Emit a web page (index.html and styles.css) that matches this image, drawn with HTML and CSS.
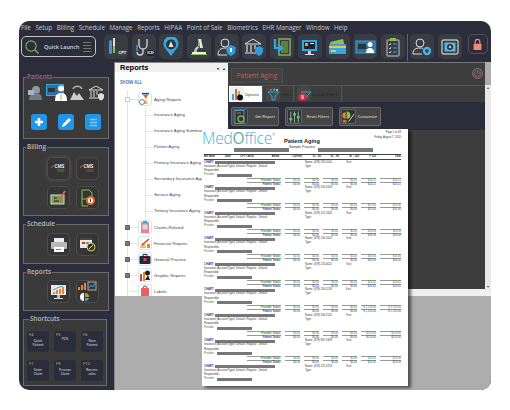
FILE: index.html
```html
<!DOCTYPE html>
<html lang="en">
<head>
    <meta charset="UTF-8">
    <title>Patient Aging</title>
    <link rel="stylesheet" href="styles.css">
</head>
<body>
    <div class="app">
        <nav class="menu-bar">
            <span>File</span><span>Setup</span><span>Billing</span><span>Schedule</span><span>Manage</span><span>Reports</span><span>HIPAA</span><span>Point of Sale</span><span>Biometrics</span><span>EHR Manager</span><span>Window</span><span>Help</span>
        </nav>

        <div class="toolbar">
            <div class="quick-launch">
                <svg width="14" height="14" viewBox="0 0 15 15"><circle cx="6.500" cy="6.500" r="5.500" fill="none" stroke="#7fae55" stroke-width="1.200"/><path d="M10.500 10.500l4 4" stroke="#7fae55" stroke-width="1.400"/></svg>
                <span>Quick Launch</span>
                <div class="ql-lines"><i></i><i></i><i></i><i></i></div>
            </div>
            <div class="tool-buttons">
                <button class="tool"><svg width="20" height="20" viewBox="0 0 20 20"><rect x="3" y="3" width="3" height="14" rx="1.500" fill="#3f9ad6"/><rect x="7" y="1" width="2" height="15" fill="#e0e0e0"/><rect x="7" y="9" width="2" height="7" fill="#8cc152"/></svg><b class="tool-tag">CPT</b></button>
                <button class="tool"><svg width="20" height="20" viewBox="0 0 20 20"><path d="M5 2v6a4 4 0 0 0 8 0V2M9 12v3a3 3 0 0 1-6 0" fill="none" stroke="#d8d8d8" stroke-width="1.300"/><path d="M3 8v6" stroke="#3f9ad6" stroke-width="1.500"/></svg><b class="tool-tag dark">ICD</b></button>
                <button class="tool"><svg width="18" height="20" viewBox="0 0 18 20"><path d="M9 19L3 11a7.500 7.500 0 1 1 12 0z" fill="#35a7e0"/><circle cx="9" cy="7.500" r="5" fill="#333"/><path d="M9 4l2.500 6h-5z" fill="#cfe8f5"/></svg></button>
                <button class="tool"><svg width="20" height="20" viewBox="0 0 20 20"><path d="M9 2h3l2 9h-3z" fill="#e8e8e8"/><path d="M5 15c0-3 2-5 4-6l1 2c-2 1-3 2-2 4z" fill="#cfcfcf"/><rect x="3" y="15" width="14" height="2" fill="#f0f0f0"/><rect x="9" y="5" width="2" height="4" fill="#8cc152"/><rect x="2" y="17" width="16" height="1" fill="#8cc152"/></svg></button>
                <button class="tool"><svg width="20" height="20" viewBox="0 0 20 20"><circle cx="8" cy="6" r="4" fill="none" stroke="#ddd"/><path d="M1 18c0-5 3-7 7-7 1 0 2 .2 3 .5M1 18h9" fill="none" stroke="#ddd"/><path d="M14 8l4.500 2v4c0 2-2 4-4.500 5-2.500-1-4.500-3-4.500-5v-4z" fill="#2f9be0"/><rect x="13" y="11" width="2" height="4" fill="#fff"/></svg></button>
                <button class="tool"><svg width="20" height="20" viewBox="0 0 20 20"><path d="M1 7l8-5 8 5z" fill="none" stroke="#e0e0e0"/><path d="M3 8v7M7 8v7M11 8v4M1 16h11" stroke="#e0e0e0" stroke-width="1.200"/><path d="M15 9l4 2v3c0 2-2 4-4 5-2-1-4-3-4-5v-3z" fill="#2f9be0"/></svg></button>
                <button class="tool"><svg width="20" height="20" viewBox="0 0 20 20"><rect x="7" y="2" width="11" height="16" fill="none" stroke="#7fae55" stroke-width="1.500"/><rect x="9" y="4" width="7" height="12" fill="#5b7f3c"/><path d="M3 2v9h6M6 8l4 3-4 3" fill="none" stroke="#35a7e0" stroke-width="2.200"/></svg></button>
                <button class="tool"><svg width="20" height="20" viewBox="0 0 20 20"><rect x="2" y="3" width="15" height="11" fill="#35a7e0"/><rect x="4" y="5" width="11" height="7" fill="#223"/><rect x="5" y="6" width="3" height="3" fill="#8cc152"/><rect x="10" y="6" width="4" height="1" fill="#ddd"/><rect x="8" y="14" width="3" height="3" fill="#ccc"/><rect x="5" y="17" width="9" height="1" fill="#ddd"/></svg></button>
                <button class="tool"><svg width="21" height="20" viewBox="0 0 21 20"><path d="M3 5l13-3 2 8-13 3z" fill="#8cc152"/><rect x="2" y="7" width="17" height="10" rx="1" fill="#35a7e0"/><rect x="2" y="9" width="17" height="2" fill="#f5c242"/><rect x="4" y="13" width="5" height="2" fill="#f5c242"/></svg></button>
                <button class="tool"><svg width="21" height="20" viewBox="0 0 21 20"><rect x="1" y="4" width="19" height="12" fill="#2d6f9e" stroke="#35a7e0"/><rect x="3" y="7" width="8" height="5" fill="#333"/><circle cx="15" cy="7.500" r="2.500" fill="#fff"/><path d="M11 16c0-4 2-5 4-5s4 1 4 5z" fill="#fff"/></svg></button>
                <button class="tool"><svg width="18" height="20" viewBox="0 0 18 20"><rect x="3" y="3" width="12" height="16" rx="1" fill="none" stroke="#9a9a9a" stroke-width="1.500"/><rect x="6" y="1" width="6" height="3" fill="#8cc152"/><path d="M5 7l1 1 1-2M5 11l1 1 1-2M5 15l1 1 1-2" fill="none" stroke="#eee" stroke-width=".8"/><path d="M9 7h4M9 11h4M9 15h4" stroke="#35a7e0"/></svg></button>
                <span class="tool-divider"></span>
                <button class="tool"><svg width="20" height="20" viewBox="0 0 20 20"><circle cx="8" cy="6" r="4" fill="none" stroke="#ddd"/><path d="M1 17c0-5 3-6 7-6 1 0 2 .1 3 .4M1 17h9" fill="none" stroke="#ddd"/><circle cx="15" cy="14" r="3" fill="none" stroke="#4fb0e8" stroke-width="2.400"/></svg></button>
                <button class="tool"><svg width="20" height="20" viewBox="0 0 20 20"><rect x="2" y="3" width="16" height="14" rx="2" fill="none" stroke="#bbb" stroke-width="1.400"/><rect x="4.500" y="5.500" width="11" height="9" fill="#55b4e8"/><circle cx="10" cy="10" r="3" fill="#333"/><circle cx="10" cy="10" r="1.200" fill="#ccc"/></svg></button>
                <button class="tool lock"><svg width="11" height="13" viewBox="0 0 14 16"><path d="M4 7V4.500a3 3 0 0 1 6 0V7" fill="none" stroke="#f08a78" stroke-width="1.500"/><rect x="2" y="7" width="10" height="8" rx="1" fill="#f08a78"/></svg></button>
            </div>
        </div>

        <div class="workspace">
            <aside class="sidebar">
                <fieldset class="group patients">
                    <legend class="legend-active">Patients</legend>
                    <div class="patient-icons">
                        <svg width="17" height="17" viewBox="0 0 17 17"><circle cx="9" cy="6" r="4" fill="#8b9aa8"/><path d="M2 16c0-5 3-7 7-7s6 2 6 7z" fill="#6d7c8a"/><rect x="1" y="6" width="6" height="5" fill="#a9b4bd"/></svg>
                        <svg width="21" height="17" viewBox="0 0 21 17"><rect x="0.500" y="0.500" width="17" height="11" fill="#2d6f9e" stroke="#35a7e0"/><rect x="2" y="4" width="7" height="4" fill="#333"/><circle cx="15" cy="4.500" r="3" fill="#fff"/><path d="M9 17c0-6 2-8 6-8s6 2 6 8z" fill="#fff"/><path d="M15 10v6" stroke="#8cc152"/></svg>
                        <svg width="17" height="17" viewBox="0 0 17 17"><path d="M4 5a5 5 0 0 1 9 0" fill="none" stroke="#aaa" stroke-width="1.500"/><path d="M1 16l4-8 3 4 2-3 5 7z" fill="#c8cfc0"/></svg>
                        <svg width="17" height="17" viewBox="0 0 17 17"><path d="M1 6l7-4 7 4z" fill="none" stroke="#ddd"/><path d="M3 7v6M6 7v6M9 7v4M1 14h9" stroke="#ddd"/><path d="M13 9l3 1.500v2.500c0 1.500-1.500 3-3 3.500-1.500-.5-3-2-3-3.500v-2.500z" fill="#ddd"/></svg>
                    </div>
                    <div class="patient-actions">
                        <span class="blue-btn"><svg width="10" height="10" viewBox="0 0 10 10"><path d="M5 1v8M1 5h8" stroke="#fff" stroke-width="2.600"/></svg></span>
                        <span class="blue-btn"><svg width="11" height="11" viewBox="0 0 11 11"><path d="M1 10l1-3 6-6 2 2-6 6z" fill="#fff"/></svg></span>
                        <span class="blue-btn"><svg width="9" height="9" viewBox="0 0 9 9"><path d="M1 1.500h7M1 4.500h7M1 7.500h7" stroke="#7cc4f4" stroke-width="1.400"/></svg></span>
                    </div>
                </fieldset>

                <fieldset class="group billing">
                    <legend>Billing</legend>
                    <div class="icon-grid">
                        <span class="side-btn picked"><svg class="cms-arc" width="7" height="4" viewBox="0 0 7 4"><path d="M0 4c1-2 3-3 7-3" fill="none" stroke="#c8503f" stroke-width="1.200"/></svg><span class="cms">CMS<em class="cms-green">1500</em></span></span>
                        <span class="side-btn"><svg class="cms-arc" width="7" height="4" viewBox="0 0 7 4"><path d="M0 4c1-2 3-3 7-3" fill="none" stroke="#c8503f" stroke-width="1.200"/></svg><span class="cms">CMS<em class="cms-red">1450</em></span></span>
                        <span class="side-btn"><svg width="17" height="15" viewBox="0 0 17 15"><rect x="1" y="5" width="13" height="9" fill="#7a9a5a" stroke="#cfe0bf"/><path d="M4 8h3M4 11h5" stroke="#222"/><path d="M10 9l5-8" stroke="#e0604f" stroke-width="1.800"/></svg></span>
                        <span class="side-btn"><svg width="16" height="18" viewBox="0 0 16 18"><path d="M2 1h7l3 3v6H2z M2 10v7h6" fill="none" stroke="#8cc152"/><circle cx="10.500" cy="11.500" r="4.500" fill="#e8662a"/><circle cx="10.500" cy="11.500" r="2.500" fill="#fff"/><rect x="10" y="10" width="1" height="3" fill="#333"/></svg></span>
                    </div>
                </fieldset>

                <fieldset class="group schedule">
                    <legend>Schedule</legend>
                    <div class="icon-grid">
                        <span class="side-btn"><svg width="18" height="16" viewBox="0 0 18 16"><rect x="4" y="1" width="10" height="4" fill="#eee"/><rect x="1" y="5" width="16" height="7" rx="1" fill="#b9b9b9"/><rect x="4" y="10" width="10" height="5" fill="#fff"/><rect x="6" y="12" width="5" height="1" fill="#e0604f"/></svg></span>
                        <span class="side-btn"><svg width="17" height="15" viewBox="0 0 17 15"><rect x="1" y="1" width="12" height="10" fill="#e8e8e8"/><rect x="1" y="1" width="12" height="2" fill="#444"/><rect x="3" y="5" width="3" height="2" fill="#c0392b"/><rect x="7" y="5" width="3" height="2" fill="#7a9a5a"/><circle cx="12" cy="10" r="4" fill="#333" stroke="#d9d24a"/><path d="M10 12l4-4" stroke="#ddd"/></svg></span>
                    </div>
                </fieldset>

                <fieldset class="group reports">
                    <legend>Reports</legend>
                    <div class="icon-grid">
                        <span class="side-btn"><svg width="17" height="16" viewBox="0 0 17 16"><rect x="1" y="1" width="15" height="10" fill="#e8e8e8"/><path d="M3 10V8h2v2zM6 10V6h2v4zM9 10V5h2v5zM12 10V3h2v7z" fill="#e8862a"/><path d="M3 6l4-2 3-1 3-1" fill="none" stroke="#35a7e0"/><rect x="7" y="11" width="3" height="3" fill="#bbb"/><rect x="4" y="14" width="9" height="1" fill="#ddd"/></svg></span>
                        <span class="side-btn"><svg width="21" height="21" viewBox="0 0 21 21"><path d="M1 9V6h2v3zM4 9V4h2v5zM7 9V2h2v7z" fill="#e8862a"/><rect x="11" y="1" width="8" height="8" fill="none" stroke="#ccc" stroke-width=".8"/><path d="M12 7l2-3 2 2 2-4" fill="none" stroke="#35a7e0"/><path d="M7 12a4 4 0 1 0 0 8z" fill="#fff"/><path d="M8 12a4 4 0 0 1 4 4H8z" fill="#e8862a"/><path d="M8 17h4a4 4 0 0 1-4 3z" fill="#35a7e0"/></svg></span>
                    </div>
                </fieldset>

                <fieldset class="group shortcuts">
                    <legend>Shortcuts</legend>
                    <div class="shortcut-grid">
                        <div class="shortcut"><b>F4</b><span>Quick<br>Patient</span></div>
                        <div class="shortcut"><b>F5</b><span class="single">POS</span></div>
                        <div class="shortcut"><b>F6</b><span>New<br>Patient</span></div>
                        <div class="shortcut"><b>F7</b><span>Enter<br>Claim</span></div>
                        <div class="shortcut"><b>F9</b><span>Process<br>Claim</span></div>
                        <div class="shortcut"><b>F10</b><span>Reconc-<br>ailes</span></div>
                    </div>
                </fieldset>
            </aside>

            <main class="mdi">
                <div class="panes">
                    <section class="tree-pane">
                        <header class="tree-head">
                            <span>Reports</span>
                            <span class="pin-btns"><i>&#9662;</i><i>&#9652;</i></span>
                        </header>
                        <a class="show-all">SHOW ALL</a>
                        <ul class="tree">
                            <li>
                                <div class="node"><i class="toggle"></i><i class="dash"></i>
                                    <span class="node-icon"><svg width="12" height="12" viewBox="0 0 12 12"><rect x="3" y="0" width="7" height="1.500" fill="#2b4a8a"/><path d="M4 2h5L7 6z" fill="#e0604f"/><path d="M7 6l2 5H4z" fill="#f5c242"/><circle cx="3" cy="9" r="2.500" fill="#fff" stroke="#333" stroke-width=".6"/></svg></span>
                                    <span class="node-label">Aging Reports</span></div>
                                <ul class="sub-tree">
                                    <li>Insurance Aging</li>
                                    <li>Insurance Aging Summary</li>
                                    <li class="visited">Patient Aging</li>
                                    <li>Primary Insurance Aging</li>
                                    <li>Secondary Insurance Aging</li>
                                    <li class="visited">Service Aging</li>
                                    <li>Tertiary Insurance Aging</li>
                                </ul>
                            </li>
                            <li><div class="node"><i class="toggle dark"></i><i class="dash"></i>
                                <span class="node-icon"><svg width="12" height="12" viewBox="0 0 12 12"><rect x="2" y="1" width="8" height="11" fill="#e9828a"/><rect x="4" y="0" width="4" height="2" fill="#35a7e0"/><rect x="3.500" y="3.500" width="5" height="5" fill="#cde"/></svg></span>
                                <span class="node-label">Claims-Related</span></div></li>
                            <li><div class="node"><i class="toggle dark"></i><i class="dash"></i>
                                <span class="node-icon"><svg width="12" height="12" viewBox="0 0 12 12"><path d="M1 11c0-3 2-5 3-5s3 2 3 5z" fill="#f5c242"/><path d="M3 8l7-6" stroke="#d23b3b" stroke-width="1.400"/><rect x="8" y="7" width="3" height="4" fill="#e8862a"/></svg></span>
                                <span class="node-label">Financial Reports</span></div></li>
                            <li><div class="node"><i class="toggle dark"></i><i class="dash"></i>
                                <span class="node-icon"><svg width="12" height="12" viewBox="0 0 12 12"><path d="M4 3V1.500h4V3" fill="none" stroke="#222"/><rect x="0.500" y="3" width="11" height="8" rx="1" fill="#222838"/><rect x="4.500" y="5" width="3" height="3" fill="#e0404f"/></svg></span>
                                <span class="node-label">General Practice</span></div></li>
                            <li><div class="node"><i class="toggle dark"></i><i class="dash"></i>
                                <span class="node-icon"><svg width="12" height="12" viewBox="0 0 12 12"><rect x="1" y="5" width="2" height="7" fill="#d23b3b"/><rect x="4" y="3" width="2" height="9" fill="#e8862a"/><circle cx="8.500" cy="4" r="2.500" fill="#222"/><path d="M6 11l3-5 2 5z" fill="#222"/></svg></span>
                                <span class="node-label">Graphic Reports</span></div></li>
                            <li><div class="node"><i class="toggle none"></i><i class="dash"></i>
                                <span class="node-icon"><svg width="12" height="12" viewBox="0 0 12 12"><path d="M4 3a2 2 0 0 1 4 0" fill="none" stroke="#555"/><rect x="2" y="3" width="8" height="9" rx="1" fill="#e9605f"/></svg></span>
                                <span class="node-label">Labels</span></div></li>
                        </ul>
                    </section>

                    <section class="report-pane">
                        <div class="report-main">
                            <div class="report-body">
                                <div class="title-row">
                                    <div class="report-title">Patient Aging</div>
                                    <span class="power"><svg width="11" height="11" viewBox="0 0 11 11"><circle cx="5.500" cy="5.500" r="5" fill="#4a4a4a" stroke="#8a8a8a" stroke-width=".7"/><path d="M3.700 3.500a3 3 0 1 0 3.600 0M5.500 2v3" fill="none" stroke="#b5584d" stroke-width=".9"/></svg></span>
                                </div>
                                <div class="tabs">
                                    <div class="tab active"><span class="tab-icon"><svg width="13" height="13" viewBox="0 0 13 13"><rect x="1" y="6" width="2" height="6" fill="#35a7e0"/><rect x="4" y="1" width="2" height="11" fill="#e0604f"/><rect x="7" y="3" width="2" height="4" fill="#8cc152"/><circle cx="9" cy="9.500" r="3" fill="#111"/></svg></span>Options</div>
                                    <div class="tab filters"><span class="tab-icon"><svg width="13" height="13" viewBox="0 0 13 13"><path d="M1 4h11L8 8v4H5V8z" fill="none" stroke="#3aa0c8"/><circle cx="4" cy="2" r="1" fill="#e0604f"/><circle cx="7" cy="1.500" r="1" fill="#8cc152"/><circle cx="10" cy="2" r="1" fill="#ddd"/></svg></span>Filters</div>
                                    <div class="tab exclude"><span class="tab-icon"><svg width="13" height="13" viewBox="0 0 13 13"><path d="M3 4h10L9 8v2" fill="none" stroke="#3aa0c8"/><circle cx="4.500" cy="9" r="4" fill="#d9283a"/><path d="M3 8h3M3 10h3" stroke="#fff"/></svg></span>Exclude Filters</div>
                                </div>
                                <div class="action-row">
                                    <button class="action wide"><span class="action-icon"><svg width="13" height="14" viewBox="0 0 13 14"><rect x="1" y="0.500" width="9" height="13" fill="none" stroke="#3aa0c8"/><circle cx="7" cy="9" r="3" fill="none" stroke="#7fae55" stroke-width="1.400"/><path d="M3 3h4" stroke="#e0604f"/></svg></span>Get Report</button>
                                    <button class="action wide"><span class="action-icon"><svg width="14" height="14" viewBox="0 0 14 14"><path d="M3 1v12M7 1v12M11 1v12" stroke="#9fc0a0"/><rect x="1.500" y="8" width="3" height="2.500" fill="#5cc0b0"/><rect x="5.500" y="3" width="3" height="2.500" fill="#5cc0b0"/><rect x="9.500" y="6" width="3" height="2.500" fill="#5cc0b0"/></svg></span>Reset Filters</button>
                                    <button class="action"><span class="action-icon"><svg width="14" height="14" viewBox="0 0 14 14"><path d="M5 1a4 4 0 0 1 0 8z" fill="#8cc152"/><path d="M4 2a3.500 3.500 0 0 0 0 7z" fill="#e8862a"/><rect x="1" y="10" width="4" height="3" fill="#e0604f"/><path d="M7 12l6-8" stroke="#ddd"/></svg></span>Customize</button>
                                </div>
                                <div class="report-empty"></div>
                            </div>
                            <div class="v-scroll"><i>&#9652;</i><i>&#9662;</i></div>
                        </div>
                        <div class="h-scroll"></div>
                    </section>
                </div>

                <article class="report-page">
                    <div class="page-head">
                        <div class="logo">Med<span class="logo-o">O</span>ffice<sup>&reg;</sup></div>
                        <div class="page-title"><b>Patient Aging</b><span>Sample Practice</span></div>
                        <div class="page-meta">Page 1 of 43<br>Friday, August 7, 2020</div>
                        <i class="redact r1"></i><i class="redact r2"></i>
                    </div>
                    <div class="col-head">
                        <span>Bill Num</span><span>Date</span><span>CPT / MOD</span><span class="num">Billed</span><span class="num">Current</span><span class="num">31 - 60</span><span class="num">61 - 90</span><span class="num">91 - 120</span><span class="num">&gt; 120</span><span class="num">Total</span>
                    </div>
                    <div id="rows"></div>
                </article>
            </main>
        </div>
    </div>
    <script src="report.js"></script>
</body>
</html>
```
FILE: styles.css
```css
* {
    margin: 0;
    padding: 0;
    box-sizing: border-box;
}

body {
    background-color: white;
    font-family: "Open Sans", "Liberation Sans", sans-serif;
}

.app {
    width: 472px;
    height: 369px;
    margin: 21px 0 0 19px;
    background-color: #2b2e3a;
    border-radius: 10px;
    overflow: hidden;
    display: flex;
    flex-direction: column;
}

/* top menu */
.menu-bar {
    height: 13px;
    padding-left: 2px;
    display: flex;
    align-items: center;
    gap: 4.6px;
    font-size: 6.2px;
    color: #c9c9c9;
    white-space: nowrap;
}

.toolbar {
    height: 28px;
    padding-left: 2px;
    display: flex;
}

.quick-launch {
    width: 75px;
    height: 21px;
    margin-top: 2px;
    padding: 0 4px 0 3px;
    border: 1px solid #c4c4c4;
    border-radius: 5px;
    display: flex;
    align-items: center;
    font-size: 5.4px;
    font-weight: 600;
    color: #d8d8d8;
}

.quick-launch span {
    margin-left: 5px;
    flex: 1;
    white-space: nowrap;
}

.ql-lines i {
    display: block;
    width: 8px;
    height: 1px;
    margin: 2px 0;
    background-color: #6d7d58;
}

.tool-buttons {
    margin-left: 8px;
    display: flex;
    gap: 3.7px;
}

.tool {
    position: relative;
    width: 24px;
    height: 25px;
    background-color: #3a3c44;
    border: none;
    border-radius: 5px;
    display: flex;
    align-items: center;
    justify-content: center;
}

.tool-tag {
    position: absolute;
    right: 1px;
    bottom: 3px;
    padding: 1px;
    border-radius: 4px;
    background-color: #444;
    font-size: 3.8px;
    color: white;
}

.tool-tag.dark {
    background-color: #222;
}

.tool-divider {
    width: 1px;
    height: 27px;
    margin: 0 -1.7px;
    background-color: #666;
}

.tool.lock {
    width: 20px;
    height: 20px;
    margin-left: 2.3px;
    background-color: #2b2e3a;
    border: 1px solid #50525c;
}

.workspace {
    flex: 1;
    display: flex;
    min-height: 0;
}

/* left column */
.sidebar {
    width: 95px;
    padding: 11px 0 0 4px;
    display: flex;
    flex-direction: column;
    gap: 4px;
}

.group {
    width: 86px;
    background-color: #3a3a3a;
    border: 1px solid #6c6c6c;
}

.group legend {
    margin-left: 2px;
    padding: 0 1px;
    font-size: 6.4px;
    font-weight: 600;
    line-height: 8px;
    color: #b9b9b9;
}

.group .legend-active {
    color: #7c69b3;
}

.patients {
    padding: 3px 0 8px;
}

.patient-icons {
    padding: 0 3px;
    display: flex;
    justify-content: space-between;
    align-items: center;
}

.patient-actions {
    margin-top: 13px;
    padding: 0 7px;
    display: flex;
    justify-content: space-between;
}

.blue-btn {
    width: 16px;
    height: 16px;
    background-color: #2196e8;
    border-radius: 3px;
    display: flex;
    align-items: center;
    justify-content: center;
}

.icon-grid {
    padding-left: 23px;
    display: grid;
    grid-template-columns: 23px 23px;
    gap: 6px;
}

.billing {
    padding: 6px 0;
}

.schedule {
    padding: 5px 0 7px;
}

.reports {
    padding: 4px 0 7px;
}

.side-btn {
    position: relative;
    width: 23px;
    height: 23px;
    background-color: #353535;
    border: 1px solid #4c4c4c;
    border-radius: 5px;
    display: flex;
    align-items: center;
    justify-content: center;
}

.side-btn.picked {
    box-shadow: 0 0 0 2px #424242;
}

.cms-arc {
    position: absolute;
    left: 3px;
    top: 6px;
}

.cms {
    margin-left: 2px;
    font-size: 4.6px;
    line-height: 4.5px;
    font-weight: 700;
    color: #eee;
}

.cms em {
    display: block;
    font-style: normal;
    font-weight: 400;
    font-size: 3.6px;
    text-align: right;
}

.cms-green {
    color: #7fae55;
}

.cms-red {
    color: #d0604f;
}

.shortcuts {
    width: 84px;
    padding: 8px 3px 4px;
}

.shortcut-grid {
    display: grid;
    grid-template-columns: repeat(3, 22px);
    justify-content: space-between;
    row-gap: 8px;
}

.shortcut {
    height: 21px;
    padding: 2px;
    background-color: #2b2e3a;
    border-radius: 3px;
    color: #e4e4e4;
    font-size: 3.3px;
    line-height: 4.2px;
    text-align: center;
}

.shortcut b {
    display: block;
    font-size: 4px;
    font-weight: 600;
    color: #8ea84a;
    text-align: left;
}

.shortcut span {
    display: block;
    margin-top: 2px;
}

.shortcut .single {
    margin-top: 0;
}

/* main area */
.mdi {
    position: relative;
    flex: 1;
    background-color: #adadad;
    border-left: 1px solid #858585;
}

.panes {
    height: 234px;
    display: flex;
}

.tree-pane {
    width: 113px;
    background-color: white;
    overflow: hidden;
}

.tree-head {
    height: 10px;
    padding: 0 3px 0 5px;
    background-color: #f0f0f0;
    border-top: 1px solid #888;
    display: flex;
    justify-content: space-between;
    align-items: center;
    font-family: "Liberation Sans", sans-serif;
    font-size: 7.5px;
    font-weight: bold;
    color: black;
}

.pin-btns i {
    margin-left: 4px;
    font-size: 4px;
    font-style: normal;
    color: #333;
}

.show-all {
    display: block;
    margin: 8px 0 6px 5px;
    font-size: 4.3px;
    line-height: 5px;
    font-weight: 700;
    color: #3a80c0;
}

.tree {
    margin-left: 12px;
    border-left: 1px solid #e2e2e2;
    list-style: none;
    font-family: "Liberation Sans", sans-serif;
    font-size: 4.3px;
    color: #444;
}

.node {
    height: 16px;
    display: flex;
    align-items: center;
    white-space: nowrap;
}

.toggle {
    flex: none;
    width: 5px;
    height: 5px;
    margin-left: -3px;
    background-color: white;
    border: 1px solid #ccc;
}

.toggle.dark {
    background-color: #777;
    border-color: #666;
}

.toggle.none {
    visibility: hidden;
}

.dash {
    flex: none;
    width: 8px;
    height: 1px;
    background-color: #e2e2e2;
}

.node-icon {
    flex: none;
    width: 14px;
    height: 14px;
    margin-right: 2px;
    background-color: white;
    border: 1px solid #cfe8ee;
    border-radius: 3px;
    display: flex;
    align-items: center;
    justify-content: center;
}

.sub-tree {
    margin-left: 17px;
    border-left: 1px solid #e2e2e2;
    list-style: none;
}

.sub-tree li {
    height: 16px;
    padding-left: 8px;
    line-height: 16px;
    white-space: nowrap;
    background: linear-gradient(#e2e2e2, #e2e2e2) 0 8px / 7px 1px no-repeat;
}

.sub-tree .visited {
    color: #3a3a88;
}

.report-pane {
    flex: 1;
    display: flex;
    flex-direction: column;
}

.report-main {
    flex: 1;
    display: flex;
}

.report-body {
    flex: 1;
    display: flex;
    flex-direction: column;
    background-color: #3d3d3d;
    border-top: 1px solid #777;
}

.title-row {
    height: 22px;
    padding: 5px 2px 0 3px;
    display: flex;
    justify-content: space-between;
}

.report-title {
    width: 52px;
    height: 15px;
    background-color: #424242;
    border: 1px solid #4c4c4c;
    font-size: 6.6px;
    line-height: 13px;
    text-align: center;
    color: #c45f52;
}

.power {
    display: flex;
}

.tabs {
    height: 17px;
    padding-left: 1px;
    border-top: 1px solid #555;
    display: flex;
    align-items: stretch;
    font-size: 3.8px;
    color: #222;
}

.tab {
    padding: 0 1px 0 3px;
    border-right: 1px solid #555;
    display: flex;
    align-items: center;
    white-space: nowrap;
}

.tab.active {
    width: 34px;
    padding-left: 1px;
    background-color: white;
}

.tab.filters {
    width: 31px;
}

.tab.exclude {
    width: 48px;
}

.tab-icon {
    flex: none;
    width: 14px;
    height: 14px;
    margin-right: 1px;
    border-radius: 2px;
    background-color: #484848;
    display: flex;
    align-items: center;
    justify-content: center;
}

.tab.active .tab-icon {
    background-color: #eee;
}

.action-row {
    height: 28px;
    padding: 5px 0 0 3px;
    background-color: #2b2e3a;
    display: flex;
    gap: 6px;
}

.action {
    width: 42px;
    height: 19px;
    padding: 0 3px 0 1px;
    background-color: #454545;
    border: 1px solid #6a6a6a;
    border-radius: 2px;
    display: flex;
    align-items: center;
    justify-content: space-between;
    font-family: "Open Sans", sans-serif;
    font-size: 3.8px;
    font-weight: 600;
    color: #cfcfcf;
    white-space: nowrap;
}

.action.wide {
    width: 48px;
}

.action-icon {
    flex: none;
    width: 15px;
    height: 15px;
    background-color: #333;
    border: 1px solid #4a6a70;
    border-radius: 2px;
    display: flex;
    align-items: center;
    justify-content: center;
}

.report-empty {
    flex: 1;
}

.v-scroll {
    width: 6px;
    margin-top: 23px;
    background-color: #e8e8e8;
    display: flex;
    flex-direction: column;
    justify-content: space-between;
    align-items: center;
    font-size: 4px;
    color: #555;
}

.v-scroll i {
    font-style: normal;
}

.h-scroll {
    height: 7px;
    background-color: #f0f0f0;
}

/* scanned report lying over the windows */
.report-page {
    position: absolute;
    left: 87px;
    top: 67px;
    width: 206px;
    height: 257px;
    padding: 0 7px 0 2px;
    background-color: white;
    box-shadow: 3px 2px 3px rgba(0,0,0,0.55);
    overflow: hidden;
    font-family: "Liberation Sans", sans-serif;
    font-size: 2.7px;
    color: #333;
}

.page-head {
    position: relative;
    height: 25px;
}

.logo {
    position: absolute;
    left: -2px;
    top: 0;
    font-family: "Open Sans", sans-serif;
    font-size: 15.5px;
    line-height: 19px;
    font-weight: 300;
    letter-spacing: -0.2px;
    color: #45b3d8;
    white-space: nowrap;
}

.logo-o {
    font-weight: 400;
    color: #5fae8c;
}

.logo sup {
    font-size: 4px;
    line-height: 0;
    vertical-align: 8px;
    color: #444;
}

.page-title {
    position: absolute;
    left: 78px;
    top: 9px;
    width: 40px;
    text-align: center;
}

.page-title b {
    display: block;
    font-size: 5.6px;
    line-height: 6px;
    color: #222;
}

.page-title span {
    display: block;
    margin-top: 0.5px;
    font-size: 3.6px;
    line-height: 5px;
}

.page-meta {
    position: absolute;
    right: 0;
    top: 2px;
    font-size: 2.7px;
    line-height: 4.5px;
    text-align: right;
}

.redact {
    position: absolute;
    top: 19px;
    height: 4px;
    background-color: #777;
}

.r1 {
    left: 30px;
    width: 55px;
}

.r2 {
    left: 114px;
    width: 55px;
}

.col-head {
    height: 6px;
    display: grid;
    grid-template-columns: 21px 15px 20px 19px 23px 19px 18px 20px 17px 25px;
    border-top: 1px solid #444;
    border-bottom: 1px solid #444;
    font-weight: bold;
    line-height: 4px;
    white-space: nowrap;
    color: #222;
}

.col-head .num {
    text-align: right;
}

#rows {
    margin-top: 0.5px;
}

.block {
    height: 25.5px;
    display: grid;
    grid-template-rows: repeat(6, 1fr);
    line-height: 4.25px;
    white-space: nowrap;
}

.info-line {
    display: flex;
    align-items: center;
}

.chart {
    width: 11px;
    color: #2b3a9a;
    font-weight: bold;
}

.provider {
    width: 13px;
    color: #2a8a3a;
}

.bar {
    height: 3px;
    background-color: #777;
}

.bar.long {
    width: 60px;
    margin-right: 30px;
}

.bar.short {
    width: 35px;
}

.spacer {
    width: 101px;
}

.visit {
    margin-left: 14px;
}

.totals {
    display: grid;
    grid-template-columns: 43px 34px repeat(5, 19px) 25px;
    line-height: 3.2px;
}

.totals span {
    text-align: right;
    border-top: 1px solid #999;
}

.totals .label {
    grid-column: 2;
    font-weight: bold;
}

.totals .cell {
    margin-left: 4px;
}

.provider-totals {
    color: #2a8a3a;
}

.patient-totals {
    color: #2b3a9a;
}
```
FILE: report.js
```js
// one block per account on the report page
const accounts = [
    { phone: '(478) 555-0100', over: '$24.22' },
    { phone: '(478) 555-0106', over: '$15.00' },
    { phone: '(478) 221-2426', over: '$28.08' },
    { phone: '(478) 226-2001', over: '$26.00' },
    { phone: '(478) 224-4022', over: '$24.62' },
    { phone: '(478) 534-1118', over: '$ 1,150.00' },
    { phone: '(478) 334-2120', over: '$213.00' },
    { phone: '(478) 867-5309', over: '$13.45' },
    { phone: '(478) 222-4703', over: null }
];

function totalsRow(kind, label, over) {
    let cells = '';
    for (let i = 0; i < 4; i++) {
        cells += '<span class="cell">$0.00</span>';
    }
    cells += '<span class="cell">' + over + '</span><span class="cell">' + over + '</span>';
    return '<div class="totals ' + kind + '"><span class="label">' + label + '</span>' + cells + '</div>';
}

let html = '';
accounts.forEach(function(acc) {
    html += '<div class="block">';
    html += '<div class="info-line"><span class="chart">CHART:</span><i class="bar long"></i><span>Name: ' + acc.phone + '</span><span class="visit">Visit:</span></div>';
    html += '<div class="info-line"><span class="spacer">Insurance (Account/Type): Default / Regular - Default</span><span>Type:</span></div>';
    html += '<div class="info-line">Responsible</div>';
    html += '<div class="info-line"><span class="provider">Provider:</span><i class="bar short"></i></div>';
    if (acc.over) {
        html += totalsRow('provider-totals', 'Provider Totals:', acc.over);
        html += totalsRow('patient-totals', 'Patient Totals:', acc.over);
    }
    html += '</div>';
});
document.getElementById('rows').innerHTML = html;
```
